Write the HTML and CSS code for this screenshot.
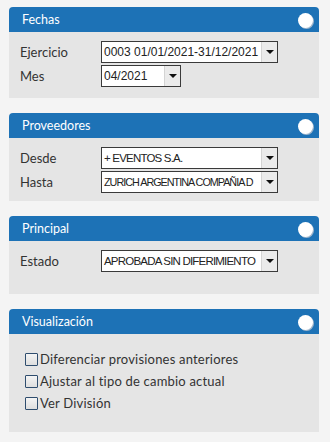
FILE: index.html
```html
<!DOCTYPE html>
<html lang="es">
<head>
  <meta charset="UTF-8" />
  <meta name="viewport" content="width=device-width, initial-scale=1.0" />
  <title>Filtros</title>
  <link rel="stylesheet" href="styles.css">
</head>
<body>
  <div class="panel">
    <div class="panel-header">
      <span>Fechas</span>
      <span class="toggle"></span>
    </div>
    <div class="panel-body dates">
      <div class="field">
        <label>Ejercicio</label>
        <div class="select select-wide date-font"><span>0003 01/01/2021-31/12/2021</span><i class="arrow"></i></div>
      </div>
      <div class="field">
        <label>Mes</label>
        <div class="select select-short date-font"><span>04/2021</span><i class="arrow"></i></div>
      </div>
    </div>
  </div>

  <div class="panel">
    <div class="panel-header">
      <span>Proveedores</span>
      <span class="toggle"></span>
    </div>
    <div class="panel-body">
      <div class="field">
        <label>Desde</label>
        <div class="select select-wide"><span>+ EVENTOS S.A.</span><i class="arrow"></i></div>
      </div>
      <div class="field">
        <label>Hasta</label>
        <div class="select select-wide tight"><span>ZURICH ARGENTINA COMPAÑIA D</span><i class="arrow"></i></div>
      </div>
    </div>
  </div>

  <div class="panel">
    <div class="panel-header">
      <span>Principal</span>
      <span class="toggle"></span>
    </div>
    <div class="panel-body tall">
      <div class="field">
        <label>Estado</label>
        <div class="select select-wide"><span>APROBADA SIN DIFERIMIENTO</span><i class="arrow"></i></div>
      </div>
    </div>
  </div>

  <div class="panel">
    <div class="panel-header">
      <span>Visualización</span>
      <span class="toggle"></span>
    </div>
    <div class="panel-body checks">
      <label class="check"><span class="box"></span>Diferenciar provisiones anteriores</label>
      <label class="check"><span class="box"></span>Ajustar al tipo de cambio actual</label>
      <label class="check"><span class="box"></span>Ver División</label>
    </div>
  </div>
</body>
</html>
```

FILE: styles.css
```css
body {
  margin: 0;
  padding: 7px 11px 0 9px;
  background-color: #f4f4f4;
  font-family: 'Lato', 'Liberation Sans', sans-serif;
  color: #333;
}
.panel {
  margin-bottom: 15px;
}
.panel-header {
  height: 25px;
  background-color: #1d72b6;
  color: white;
  font-size: 12.5px;
  display: flex;
  align-items: center;
  justify-content: space-between;
  padding: 0 6px 0 13px;
  border-radius: 4px 4px 0 0;
}
.toggle {
  width: 15px;
  height: 15px;
  border-radius: 50%;
  background-color: white;
  box-shadow: 1px 1px 0 #9fb6cc;
  margin-top: 1px;
}
.panel-body {
  background-color: #e5e5e5;
  padding: 9px 11px 8px;
  display: flex;
  flex-direction: column;
  gap: 2px;
}
.panel-body.dates {
  padding-bottom: 11px;
}
.panel-body.tall {
  padding-bottom: 22px;
}
.field {
  display: flex;
  align-items: center;
}
.field label {
  width: 81px;
  font-size: 13px;
}
.select {
  height: 22px;
  box-sizing: border-box;
  border: 1px solid #3a3a3a;
  background-color: white;
  display: flex;
  align-items: stretch;
  font-size: 11.5px;
  letter-spacing: -0.8px;
  font-family: 'Liberation Sans', sans-serif;
  color: #222;
}
.select span {
  flex: 1;
  padding-left: 2px;
  line-height: 20px;
  white-space: nowrap;
  overflow: hidden;
}
.select.tight {
  font-size: 10.8px;
  letter-spacing: -1px;
}
.date-font {
  font-size: 12px;
  letter-spacing: 0;
}
.select-wide {
  width: 177px;
}
.select-short {
  width: 80px;
}
.arrow {
  width: 15px;
  background-color: #ebebeb;
  border-left: 1px solid #d4d4d4;
  display: flex;
  align-items: center;
  justify-content: center;
}
.arrow::after {
  content: "";
  border-left: 4px solid transparent;
  border-right: 4px solid transparent;
  border-top: 4px solid #111;
}
.panel-body.checks {
  padding: 14px 16px 18px;
  gap: 0;
}
.check {
  display: flex;
  align-items: center;
  height: 22px;
  font-size: 13px;
  letter-spacing: 0.2px;
  gap: 2px;
}
.box {
  width: 13px;
  height: 13px;
  box-sizing: border-box;
  border: 1px solid #2f4d6e;
  border-radius: 1px;
  background: linear-gradient(#f4f4f4, #dedede);
}
```
